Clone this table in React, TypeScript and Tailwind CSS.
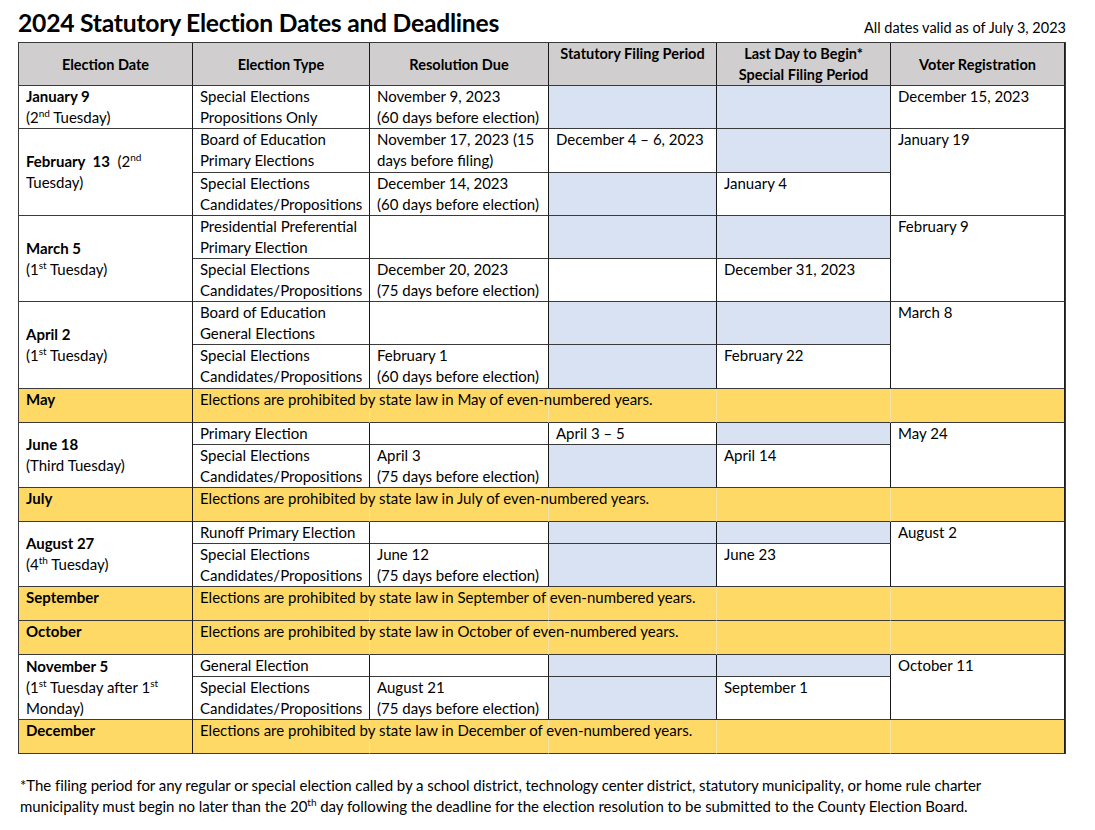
import React from "react";

const FONT = { fontFamily: "Lato, 'Liberation Sans', sans-serif" };

function Sup({ children }: { children: React.ReactNode }) {
  return <span className="relative -top-[6px] text-[10px] leading-none align-baseline">{children}</span>;
}

const V = "border-r border-r-[#1a1a1a]";
const H = "border-b border-b-[#3a3a3a]";
const cellBase = `${V} ${H} px-[7px] py-0 align-top text-left`;
const blue = "bg-[#D9E2F3]";
const yellow = "bg-[#FFD966]";

function Td({
  children,
  cls = "",
  rowSpan,
}: {
  children?: React.ReactNode;
  cls?: string;
  rowSpan?: number;
}) {
  return (
    <td rowSpan={rowSpan} className={`${cellBase} ${cls}`}>
      {children}
    </td>
  );
}

function DateCell({ rowSpan, children }: { rowSpan?: number; children: React.ReactNode }) {
  return (
    <td rowSpan={rowSpan} className={`${V} ${H} px-[7px] py-0 align-middle text-left`}>
      {children}
    </td>
  );
}

function YellowRow({ month, text }: { month: string; text: string }) {
  return (
    <tr className="h-[34px]">
      <td className={`${V} ${H} ${yellow} px-[7px] align-top font-bold`}>{month}</td>
      <td className={`border-r border-r-[#f3e3a8] ${H} ${yellow} px-[7px] align-top whitespace-nowrap overflow-visible`}>
        {text}
      </td>
      <td className={`border-r border-r-[#f3e3a8] ${H} ${yellow}`}></td>
      <td className={`border-r border-r-[#f3e3a8] ${H} ${yellow}`}></td>
      <td className={`border-r border-r-[#f3e3a8] ${H} ${yellow}`}></td>
      <td className={`${V} ${H} ${yellow}`}></td>
    </tr>
  );
}

export default function App() {
  return (
    <div className="w-[1095px] h-[830px] bg-white text-black overflow-hidden" style={FONT}>
      <div className="pl-[18px] pt-[8px]">
        <div className="flex w-[1048px] justify-between h-[34px]">
          <h1 className="self-start text-[24.7px] font-bold leading-[30px] tracking-[-0.25px]">
            2024 Statutory Election Dates and Deadlines
          </h1>
          <div className="self-end text-[14.5px] leading-[20px] pb-[4px]">All dates valid as of July 3, 2023</div>
        </div>

        <table
          className="table-fixed border-separate border-spacing-0 w-[1048px] border-l border-t border-r border-l-[#3a3a3a] border-t-[#3a3a3a] border-r-[#3a3a3a] text-[15px] leading-[21px]"
        >
          <colgroup>
            <col className="w-[174px]" />
            <col className="w-[177px]" />
            <col className="w-[179px]" />
            <col className="w-[168px]" />
            <col className="w-[174px]" />
            <col className="w-[174px]" />
          </colgroup>
          <thead>
            <tr className="h-[43px] bg-[#D0CECE] font-bold text-[14.5px]">
              <th className={`${V} ${H} align-middle text-center`}>Election Date</th>
              <th className={`${V} ${H} align-middle text-center`}>Election Type</th>
              <th className={`${V} ${H} align-middle text-center`}>Resolution Due</th>
              <th className={`${V} ${H} align-top text-center`}>Statutory Filing Period</th>
              <th className={`${V} ${H} align-middle text-center`}>
                Last Day to Begin*
                <br />
                Special Filing Period
              </th>
              <th className={`${V} ${H} align-middle text-center`}>Voter Registration</th>
            </tr>
          </thead>
          <tbody>
            {/* January 9 */}
            <tr className="h-[43px]">
              <DateCell>
                <b>January 9</b>
                <br />(2<Sup>nd</Sup> Tuesday)
              </DateCell>
              <Td>
                Special Elections
                <br />
                Propositions Only
              </Td>
              <Td>
                November 9, 2023
                <br />
                (60 days before election)
              </Td>
              <Td cls={blue} />
              <Td cls={blue} />
              <Td>December 15, 2023</Td>
            </tr>

            {/* February 13 */}
            <tr className="h-[44px]">
              <DateCell rowSpan={2}>
                <b>February&nbsp; 13</b>&nbsp; (2<Sup>nd</Sup>
                <br />
                Tuesday)
              </DateCell>
              <Td>
                Board of Education
                <br />
                Primary Elections
              </Td>
              <Td>
                November 17, 2023 (15
                <br />
                days before filing)
              </Td>
              <Td>December 4 – 6, 2023</Td>
              <Td cls={blue} />
              <Td rowSpan={2}>January 19</Td>
            </tr>
            <tr className="h-[43px]">
              <Td>
                Special Elections
                <br />
                Candidates/Propositions
              </Td>
              <Td>
                December 14, 2023
                <br />
                (60 days before election)
              </Td>
              <Td cls={blue} />
              <Td>January 4</Td>
            </tr>

            {/* March 5 */}
            <tr className="h-[43px]">
              <DateCell rowSpan={2}>
                <b>March 5</b>
                <br />(1<Sup>st</Sup> Tuesday)
              </DateCell>
              <Td>
                Presidential Preferential
                <br />
                Primary Election
              </Td>
              <Td />
              <Td cls={blue} />
              <Td cls={blue} />
              <Td rowSpan={2}>February 9</Td>
            </tr>
            <tr className="h-[43px]">
              <Td>
                Special Elections
                <br />
                Candidates/Propositions
              </Td>
              <Td>
                December 20, 2023
                <br />
                (75 days before election)
              </Td>
              <Td />
              <Td>December 31, 2023</Td>
            </tr>

            {/* April 2 */}
            <tr className="h-[43px]">
              <DateCell rowSpan={2}>
                <b>April 2</b>
                <br />(1<Sup>st</Sup> Tuesday)
              </DateCell>
              <Td>
                Board of Education
                <br />
                General Elections
              </Td>
              <Td />
              <Td cls={blue} />
              <Td cls={blue} />
              <Td rowSpan={2}>March 8</Td>
            </tr>
            <tr className="h-[44px]">
              <Td>
                Special Elections
                <br />
                Candidates/Propositions
              </Td>
              <Td>
                February 1
                <br />
                (60 days before election)
              </Td>
              <Td cls={blue} />
              <Td>February 22</Td>
            </tr>

            <YellowRow month="May" text="Elections are prohibited by state law in May of even-numbered years." />

            {/* June 18 */}
            <tr className="h-[22px]">
              <DateCell rowSpan={2}>
                <b>June 18</b>
                <br />
                (Third Tuesday)
              </DateCell>
              <Td>Primary Election</Td>
              <Td />
              <Td>April 3 – 5</Td>
              <Td cls={blue} />
              <Td rowSpan={2}>May 24</Td>
            </tr>
            <tr className="h-[43px]">
              <Td>
                Special Elections
                <br />
                Candidates/Propositions
              </Td>
              <Td>
                April 3
                <br />
                (75 days before election)
              </Td>
              <Td cls={blue} />
              <Td>April 14</Td>
            </tr>

            <YellowRow month="July" text="Elections are prohibited by state law in July of even-numbered years." />

            {/* August 27 */}
            <tr className="h-[22px]">
              <DateCell rowSpan={2}>
                <b>August 27</b>
                <br />(4<Sup>th</Sup> Tuesday)
              </DateCell>
              <Td>Runoff Primary Election</Td>
              <Td />
              <Td cls={blue} />
              <Td cls={blue} />
              <Td rowSpan={2}>August 2</Td>
            </tr>
            <tr className="h-[43px]">
              <Td>
                Special Elections
                <br />
                Candidates/Propositions
              </Td>
              <Td>
                June 12
                <br />
                (75 days before election)
              </Td>
              <Td cls={blue} />
              <Td>June 23</Td>
            </tr>

            <YellowRow month="September" text="Elections are prohibited by state law in September of even-numbered years." />
            <YellowRow month="October" text="Elections are prohibited by state law in October of even-numbered years." />

            {/* November 5 */}
            <tr className="h-[22px]">
              <DateCell rowSpan={2}>
                <b>November 5</b>
                <br />(1<Sup>st</Sup> Tuesday after 1<Sup>st</Sup>
                <br />
                Monday)
              </DateCell>
              <Td>General Election</Td>
              <Td />
              <Td cls={blue} />
              <Td cls={blue} />
              <Td rowSpan={2}>October 11</Td>
            </tr>
            <tr className="h-[43px]">
              <Td>
                Special Elections
                <br />
                Candidates/Propositions
              </Td>
              <Td>
                August 21
                <br />
                (75 days before election)
              </Td>
              <Td cls={blue} />
              <Td>September 1</Td>
            </tr>

            <YellowRow month="December" text="Elections are prohibited by state law in December of even-numbered years." />
          </tbody>
        </table>

        <div className="mt-[21px] pl-[2px] text-[15px] leading-[21px] whitespace-nowrap tracking-[-0.05px]">
          *The filing period for any regular or special election called by a school district, technology center district,
          statutory municipality, or home rule charter
          <br />
          municipality must begin no later than the 20<Sup>th</Sup> day following the deadline for the election resolution
          to be submitted to the County Election Board.
        </div>
      </div>
    </div>
  );
}
